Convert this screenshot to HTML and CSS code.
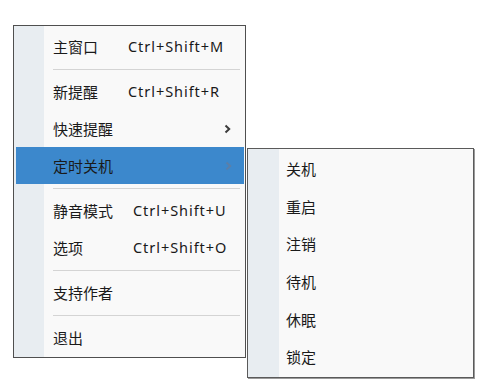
FILE: index.html
```html
<!DOCTYPE html>
<html lang="zh-CN">
<head>
<meta charset="utf-8">
<link rel="stylesheet" href="styles.css">
</head>
<body>
<div class="menu main">
  <div class="item"><span class="label">主窗口</span><span class="key">Ctrl+Shift+M</span></div>
  <div class="sep"></div>
  <div class="item"><span class="label">新提醒</span><span class="key">Ctrl+Shift+R</span></div>
  <div class="item"><span class="label">快速提醒</span><svg class="arrow" width="7" height="10" viewBox="0 0 7 10"><path d="M1.5 1.5 L5.2 5 L1.5 8.5" fill="none" stroke="#3c3c3c" stroke-width="2"/></svg></div>
  <div class="item active"><span class="label">定时关机</span><svg class="arrow" width="7" height="10" viewBox="0 0 7 10"><path d="M1.5 1.5 L5.2 5 L1.5 8.5" fill="none" stroke="#5b7fa8" stroke-width="2"/></svg></div>
  <div class="sep"></div>
  <div class="item"><span class="label wide">静音模式</span><span class="key">Ctrl+Shift+U</span></div>
  <div class="item"><span class="label wide">选项</span><span class="key">Ctrl+Shift+O</span></div>
  <div class="sep"></div>
  <div class="item"><span class="label">支持作者</span></div>
  <div class="sep"></div>
  <div class="item"><span class="label">退出</span></div>
</div>
<div class="menu sub">
  <div class="item"><span class="label">关机</span></div>
  <div class="item"><span class="label">重启</span></div>
  <div class="item"><span class="label">注销</span></div>
  <div class="item"><span class="label">待机</span></div>
  <div class="item"><span class="label">休眠</span></div>
  <div class="item"><span class="label">锁定</span></div>
</div>
</body>
</html>
```
FILE: styles.css
```css
html, body {
  margin: 0;
  padding: 0;
  background: #ffffff;
}
body {
  width: 500px;
  height: 392px;
  position: relative;
  font-family: "Noto Sans", "Noto Sans CJK SC", sans-serif;
  font-size: 15px;
  color: #1a1a1a;
}
.menu {
  box-sizing: border-box;
  border: 1px solid #4f4f4f;
  background: linear-gradient(to right, #e8edf1 0, #e8edf1 31px, #f9f9f9 31px, #f9f9f9 100%);
}
.main {
  margin: 25px 0 0 13px;
  width: 233px;
  padding: 2px 1px 1px 1px;
  background: linear-gradient(to right, #e8edf1 0, #e8edf1 31px, #f9f9f9 31px, #f9f9f9 100%);
  background-origin: border-box;
}
.item {
  height: 37px;
  display: flex;
  align-items: center;
  padding-left: 38px;
  position: relative;
  line-height: 1;
}
.label {
  font-family: "Noto Sans CJK SC", sans-serif;
  width: 75px;
  flex: none;
}
.label.wide {
  width: 80px;
}
.key {
  font-family: "Noto Sans", sans-serif;
  font-size: 14.5px;
  letter-spacing: 0.95px;
}
.arrow {
  position: absolute;
  left: 209px;
  top: 14px;
}
.active {
  background: #3c88cc;
  margin-left: 1px;
  margin-right: 0;
  padding-left: 37px;
}
.sep {
  height: 8px;
  display: flex;
  align-items: center;
  margin: 0 4px 0 38px;
}
.sep::before {
  content: "";
  display: block;
  width: 100%;
  height: 1px;
  background: #d4d4d4;
}
.sub {
  position: absolute;
  left: 247px;
  top: 148px;
  width: 227px;
  height: 230px;
  padding: 1px 0;
  border-color: #5a5a5a;
  box-shadow: 1px 1px 0 #9a9a9a;
}
.sub .item {
  height: 37.6px;
}
```
